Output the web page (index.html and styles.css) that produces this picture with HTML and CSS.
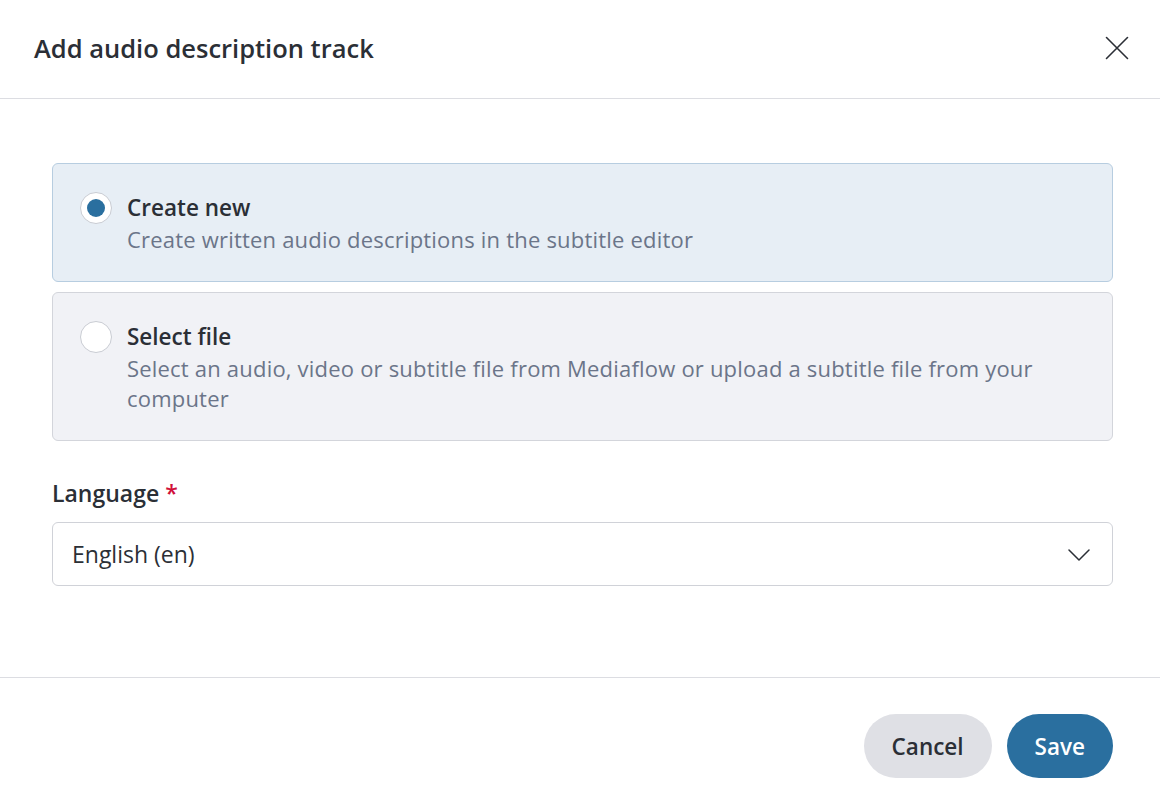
FILE: index.html
```html
<!DOCTYPE html>
<html lang="en">
<head>
<meta charset="utf-8">
<title>Add audio description track</title>
<link rel="stylesheet" href="styles.css">
</head>
<body>
<div class="modal">
  <header class="modal-header">
    <h1 class="modal-title">Add audio description track</h1>
    <button class="close-btn" aria-label="Close">
      <svg width="24" height="24" viewBox="0 0 24 24" fill="none" stroke="#2b2f36" stroke-width="1.6" stroke-linecap="round"><path d="M1.5 1.5 L22.5 22.5 M22.5 1.5 L1.5 22.5"/></svg>
    </button>
  </header>
  <main class="modal-body">
    <div class="options">
      <label class="option option-selected">
        <span class="radio radio-checked"><span class="radio-dot"></span></span>
        <span class="option-text">
          <span class="option-title">Create new</span>
          <span class="option-desc">Create written audio descriptions in the subtitle editor</span>
        </span>
      </label>
      <label class="option">
        <span class="radio"></span>
        <span class="option-text">
          <span class="option-title">Select file</span>
          <span class="option-desc">Select an audio, video or subtitle file from Mediaflow or upload a subtitle file from your computer</span>
        </span>
      </label>
    </div>
    <div class="field">
      <div class="field-label">Language <span class="required">*</span></div>
      <div class="select">
        <span class="select-value">English (en)</span>
        <svg class="chevron" width="22" height="12" viewBox="0 0 22 12" fill="none" stroke="#2b2f36" stroke-width="1.5" stroke-linecap="round" stroke-linejoin="round"><path d="M1 1 L11 11 L21 1"/></svg>
      </div>
    </div>
  </main>
  <footer class="modal-footer">
    <button class="btn btn-secondary">Cancel</button>
    <button class="btn btn-primary">Save</button>
  </footer>
</div>
</body>
</html>
```

FILE: styles.css
```css
* { box-sizing: border-box; }
html, body { margin: 0; padding: 0; background: #ffffff; }
body {
  font-family: "Open Sans", "Liberation Sans", sans-serif;
  color: #2b2f36;
  width: 1160px;
  height: 805px;
  overflow: hidden;
}
.modal { display: flex; flex-direction: column; }
.modal-header {
  height: 99px;
  border-bottom: 1px solid #dcdde2;
  display: flex;
  align-items: center;
  justify-content: space-between;
  padding: 0 31px 2px 34px;
}
.modal-title {
  margin: 0;
  font-size: 25.5px;
  font-weight: 600;
  color: #2b2f36;
}
.close-btn {
  background: none;
  border: 0;
  padding: 0;
  width: 24px;
  height: 24px;
  display: flex;
}
.modal-body {
  padding: 64px 47px 91px 52px;
  border-bottom: 1px solid #dcdde2;
}
.options { display: flex; flex-direction: column; gap: 10px; }
.option {
  display: flex;
  align-items: flex-start;
  gap: 15px;
  padding: 28px 27px 27px 27px;
  border: 1px solid #d3d5db;
  border-radius: 6px;
  background: #f1f2f6;
}
.option-selected {
  background: #e7eef5;
  border-color: #b7cde0;
}
.radio {
  flex: 0 0 auto;
  width: 32px;
  height: 32px;
  border-radius: 50%;
  background: #ffffff;
  border: 1px solid #c9ccd3;
  display: flex;
  align-items: center;
  justify-content: center;
}
.radio-dot {
  width: 18px;
  height: 18px;
  border-radius: 50%;
  background: #2a6f9f;
}
.option-text { display: flex; flex-direction: column; }
.option-title {
  font-size: 22.5px;
  font-weight: 600;
  line-height: 32px;
  color: #2b2f36;
}
.option-desc {
  font-size: 22px;
  line-height: 30px;
  color: #6b7589;
  letter-spacing: 0.2px;
}
.field { margin-top: 36px; }
.field-label {
  font-size: 23px;
  font-weight: 600;
  line-height: 32px;
  color: #2b2f36;
  margin-bottom: 13px;
}
.required { color: #d0103a; }
.select {
  height: 64px;
  border: 1px solid #d0d2d8;
  border-radius: 6px;
  display: flex;
  align-items: center;
  justify-content: space-between;
  padding: 0 22px 0 19px;
  background: #ffffff;
}
.select-value { font-size: 23px; color: #2b2f36; }
.chevron { margin-top: 2px; }
.modal-footer {
  display: flex;
  justify-content: flex-end;
  gap: 15px;
  padding: 36px 47px 27px 0;
}
.btn {
  height: 64px;
  border: 0;
  border-radius: 32px;
  font-family: "Open Sans", "Liberation Sans", sans-serif;
  font-size: 22.5px;
  font-weight: 600;
  padding: 0 28px;
}
.btn-secondary { background: #dfe0e5; color: #2b2f36; }
.btn-primary { background: #2a6f9f; color: #ffffff; }
```
